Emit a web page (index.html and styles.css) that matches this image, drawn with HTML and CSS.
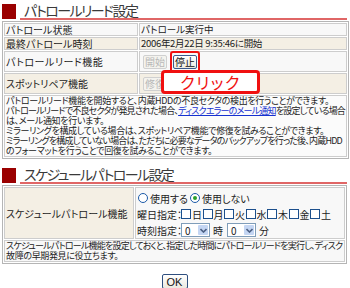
FILE: index.html
```html
<!DOCTYPE html>
<html lang="ja">
<head>
<meta charset="utf-8">
<link rel="stylesheet" href="styles.css">
</head>
<body>
<div class="page">
  <h2 class="sec-title"><span class="sq"></span><span class="tt">パトロールリード設定</span></h2>
  <div class="wrap">
    <table class="tbl t1">
      <tr class="odd"><th>パトロール状態</th><td>パトロール実行中</td></tr>
      <tr class="even"><th>最終パトロール時刻</th><td class="date">2006年2月22日 9:35:46に開始</td></tr>
      <tr class="odd tall"><th class="wide">パトロールリード機能</th><td><span class="btns"><span class="btn dis">開始</span><span class="hl"><span class="btn focus">停止</span></span></span></td></tr>
      <tr class="even tall"><th>スポットリペア機能</th><td><span class="btns"><span class="btn dis">修復</span></span></td></tr>
      <tr class="desc"><td colspan="2">パトロールリード機能を開始すると、内蔵HDDの不良セクタの検出を行うことができます。<br><span class="tight">パトロールリードで不良セクタが発見された場合、<a href="#">ディスクエラーのメール通知</a>を設定している場合</span><br>は、メール通知を行います。<br>ミラーリングを構成している場合は、スポットリペア機能で修復を試みることができます。<br><span class="tight">ミラーリングを構成していない場合は、ただちに必要なデータのバックアップを行った後、内蔵HDD</span><br>のフォーマットを行うことで回復を試みることができます。</td></tr>
    </table>
    <div class="callout">クリック</div>
  </div>

  <h2 class="sec-title second"><span class="sq"></span><span class="tt">スケジュールパトロール設定</span></h2>
  <table class="tbl t2">
    <tr>
      <th>スケジュールパトロール機能</th>
      <td class="opts">
        <div class="line"><span class="radio"></span><span class="lbl">使用する</span><span class="radio on"></span><span class="lbl">使用しない</span></div>
        <div class="line"><span class="cap">曜日指定：</span><span class="day"><span class="cb"></span>日</span><span class="day"><span class="cb"></span>月</span><span class="day"><span class="cb"></span>火</span><span class="day"><span class="cb"></span>水</span><span class="day"><span class="cb"></span>木</span><span class="day"><span class="cb"></span>金</span><span class="day"><span class="cb"></span>土</span></div>
        <div class="line"><span class="cap">時刻指定：</span><span class="sel"><span class="v">0</span><span class="arr"><svg width="7" height="5" viewBox="0 0 7 5"><path d="M0.5 1 L3.5 4 L6.5 1" fill="none" stroke="#4d6185" stroke-width="1.6"/></svg></span></span><span class="unit">時</span><span class="sel"><span class="v">0</span><span class="arr"><svg width="7" height="5" viewBox="0 0 7 5"><path d="M0.5 1 L3.5 4 L6.5 1" fill="none" stroke="#4d6185" stroke-width="1.6"/></svg></span></span><span class="unit">分</span></div>
      </td>
    </tr>
    <tr class="desc"><td colspan="2"><span class="tight">スケジュールパトロール機能を設定しておくと、指定した時間にパトロールリードを実行し、ディスク</span><br>故障の早期発見に役立ちます。</td></tr>
  </table>

  <div class="ok-row"><span class="btn ok">OK</span></div>
</div>
</body>
</html>
```

FILE: styles.css
```css
html, body {
  margin: 0;
  padding: 0;
  background: #ffffff;
}
body {
  font-family: "Noto Sans CJK JP", "Noto Sans", sans-serif;
  font-feature-settings: "palt";
  font-size: 10px;
  color: #222;
  width: 350px;
  height: 288px;
  overflow: hidden;
}
.page {
  padding: 2px 3px 0 2px;
}
.sec-title {
  margin: 0;
  display: flex;
  align-items: flex-end;
  height: 18px;
  font-weight: normal;
}
.sec-title .sq {
  width: 14px;
  height: 15px;
  background: #9a0000;
  margin-bottom: 1px;
}
.sec-title .tt {
  flex: 1;
  margin-left: 4px;
  padding-left: 4px;
  font-size: 14px;
  line-height: 16px;
  color: #3a3a3a;
  border-bottom: 2px solid #e06666;
  letter-spacing: -1.6px;
  white-space: nowrap;
}
.sec-title.second {
  margin-top: 7px;
}
.wrap {
  position: relative;
}
.tbl {
  width: 345px;
  border: 1px solid #b5b5b5;
  border-spacing: 1px;
  margin-top: 1px;
}
.tbl th, .tbl td {
  border: 1px solid #cdcdcd;
  padding: 0 1px;
  font-weight: normal;
  text-align: left;
  line-height: 11px;
  height: 11px;
  white-space: nowrap;
}
.t1 th { width: 130px; }
.t1 th.wide { letter-spacing: 0.5px; }
.t1 td { font-size: 9.5px; }
.t1 td.date { letter-spacing: -0.3px; }
.odd th, .odd td { background: #f8f8f8; }
.even th, .even td { background: #f4efe4; }
.tall th, .tall td { height: 19px; }
.tbl .desc td {
  background: #fbfbfb;
  font-size: 9px;
  line-height: 10px;
  padding: 0 1px;
  letter-spacing: -0.35px;
}
.desc .tight {
  letter-spacing: -0.8px;
}
.desc a {
  color: #1530d0;
  text-decoration: underline;
}
.btns {
  display: flex;
  gap: 3px;
  align-items: center;
  padding-left: 2px;
}
.btn {
  display: inline-flex;
  align-items: center;
  justify-content: center;
  width: 22px;
  height: 12px;
  border: 1px solid #7f7f7f;
  border-radius: 2px;
  background: linear-gradient(#ffffff, #ece9e0);
  font-size: 10px;
  line-height: 10px;
  color: #111;
}
.btn.dis {
  color: #b8b8b8;
  border-color: #d0d0d0;
  background: #f4f3ee;
}
.btn.focus {
  border-color: #3c5a8c;
}
.hl {
  display: inline-flex;
  padding: 2px 1px;
  border: 2px solid #f01010;
  border-radius: 3px;
  margin: -4px 0;
}
.callout {
  position: absolute;
  left: 159px;
  top: 49px;
  width: 93px;
  height: 18px;
  border: 3px solid #f01010;
  border-radius: 4px;
  background: #ffffff;
  color: #f01010;
  font-size: 16px;
  line-height: 18px;
  text-align: center;
  letter-spacing: 1.5px;
}
.t2 th {
  width: 126px;
  background: #f4efe4;
}
.t2 td.opts {
  background: #f8f8f8;
  padding: 2px 2px 0 1px;
  font-size: 10px;
}
.t2 .desc td {
  background: #f8f8f8;
}
.opts .line {
  display: flex;
  align-items: center;
  height: 16px;
}
.radio {
  display: inline-block;
  width: 10px;
  height: 10px;
  border: 1px solid #1c5aa8;
  border-radius: 50%;
  background: #ffffff;
  margin: 0 2px 0 1px;
  position: relative;
  box-sizing: border-box;
}
.radio.on {
  margin-left: 2px;
}
.radio.on::after {
  content: "";
  position: absolute;
  left: 2px;
  top: 2px;
  width: 4px;
  height: 4px;
  border-radius: 50%;
  background: #2aa02a;
}
.cap {
  width: 44px;
}
.day {
  display: inline-flex;
  align-items: center;
  width: 21.5px;
}
.cb {
  display: inline-block;
  width: 8px;
  height: 8px;
  border: 1px solid #1c4f8c;
  background: #ffffff;
  margin-right: 1px;
}
.sel {
  display: inline-flex;
  align-items: center;
  width: 27px;
  height: 12px;
  border: 1px solid #7f9db9;
  background: #ffffff;
}
.sel .v {
  flex: 1;
  padding-left: 3px;
  font-size: 10px;
}
.sel .arr {
  width: 10px;
  height: 10px;
  background: #c4d6f3;
  display: flex;
  align-items: center;
  justify-content: center;
  border-radius: 1px;
  margin-right: 1px;
}
.unit {
  margin: 0 4px 0 3px;
}
.ok-row {
  display: flex;
  justify-content: center;
  margin-top: 10px;
}
.btn.ok {
  width: 24px;
  height: 13px;
  border-color: #2f4f7f;
  font-family: "Liberation Sans", sans-serif;
  font-size: 11px;
}
```
